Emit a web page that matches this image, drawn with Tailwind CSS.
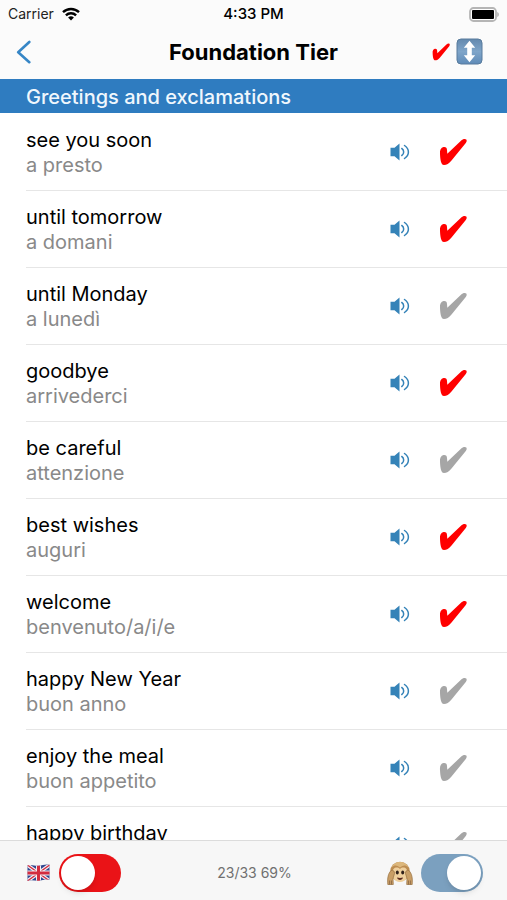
<!DOCTYPE html>
<html lang="en">
  <head>
    <meta charset="UTF-8" />
    <meta name="viewport" content="width=device-width, initial-scale=1.0" />
    <title>Foundation Tier</title>
    <script src="https://cdn.jsdelivr.net/npm/@tailwindcss/browser@4"></script>
  </head>
  <body
    class="flex h-screen flex-col overflow-hidden bg-white font-['Inter',sans-serif] text-black"
  >
    <header class="bg-[#fbfbfb]">
      <!-- Status bar -->
      <div class="grid h-7 grid-cols-3 items-center pr-2 pl-2 text-sm">
        <div class="flex items-center gap-2 text-[#222]">
          <span>Carrier</span>
          <svg class="h-[14px] w-[18px]" viewBox="0 0 18 14" fill="none" stroke="#000" stroke-width="2.4">
            <path d="M1 5.2a11.5 11.5 0 0 1 16 0" />
            <path d="M3.9 8.3a7.3 7.3 0 0 1 10.2 0" />
            <path d="M9 13.6 6.1 10.6a4.2 4.2 0 0 1 5.8 0Z" fill="#000" stroke="none" />
          </svg>
        </div>
        <span class="text-center text-[15px] font-medium">4:33 PM</span>
        <svg class="h-[15px] w-[31px] justify-self-end" viewBox="0 0 31 15">
          <rect x="2" y="1" width="26" height="13" rx="3.5" fill="#fff" stroke="#b5b5b5" stroke-width="1.8" />
          <rect x="4" y="3" width="22" height="9" rx="1" fill="#000" />
          <path d="M29.2 5c1.2.5 1.700 1.4 1.700 2.5s-.5 2-1.700 2.500Z" fill="#b5b5b5" />
        </svg>
      </div>

      <!-- Navigation bar -->
      <nav class="grid h-[51px] grid-cols-[1fr_auto_1fr] items-center px-4 pb-1">
        <a href="#" aria-label="Back">
          <svg class="h-6 w-4" viewBox="0 0 16 24" fill="none" stroke="#3686c6" stroke-width="2.6" stroke-linecap="round" stroke-linejoin="round">
            <path d="M13.300 2 2.200 12.200l11.100 10" />
          </svg>
        </a>
        <h1 class="text-[22px] leading-6 font-bold">Foundation Tier</h1>
        <div class="flex items-center justify-end gap-[6px] pr-2">
          <button type="button" aria-label="Show ticked" class="text-[#ff0000]">
            <svg class="h-[18px] w-[18px]" viewBox="0 0 28 28" fill="currentColor">
              <path d="M1 16C.6 12 2 9.500 4.500 9 6.800 8.600 8 10 8 12l.3 3.800L22.500 2.200c2-1.600 4-1.600 4.800-.6.700 1 .4 2.200-.5 3.400L12.500 22.500C10 25.600 7.500 27 5 27 2 27 1.300 22 1 16Z" />
            </svg>
          </button>
          <button type="button" aria-label="Sort">
            <svg class="h-[27px] w-[27px]" viewBox="0 0 27 27">
              <defs>
                <linearGradient id="sort" x1="0" y1="0" x2="0" y2="1">
                  <stop offset="0" stop-color="#6489ae" />
                  <stop offset="0.500" stop-color="#7fa5c9" />
                  <stop offset="1" stop-color="#5f8bb8" />
                </linearGradient>
              </defs>
              <rect x="1" y="1" width="25" height="25" rx="4" fill="url(#sort)" stroke="#587b9c" />
              <path d="M13.500 2.800 19.200 9.800h-3.400v7.400h3.400L13.500 24.200l-5.700-7h3.400V9.800H7.800Z" fill="#fff" />
            </svg>
          </button>
        </div>
      </nav>
    </header>

    <h2
      class="h-[34px] shrink-0 bg-[#2f7cc0] pt-px pl-[26px] text-xl leading-[34px] font-medium text-[#f0f7fd]"
    >
      Greetings and exclamations
    </h2>

    <main class="min-h-0 flex-1 overflow-hidden">
      <ul id="phrases" class="pt-px pl-[26px]"></ul>
    </main>

    <footer
      class="grid h-[60px] shrink-0 grid-cols-3 items-center border-t border-[#dcdcdc] bg-[#f7f7f7] pt-1 pr-6 pl-[26px]"
    >
      <label class="flex items-center gap-2">
        <svg class="h-6 w-[25px]" viewBox="0 0 25 24" role="img" aria-label="English">
          <defs>
            <clipPath id="flag">
              <path d="M1.500 4.500c4-1.400 7 .6 11 .3 4-.2 7-2 11-1v15c-4-1-7 .6-11 .9-4 .2-7-1.300-11 .3Z" />
            </clipPath>
          </defs>
          <g clip-path="url(#flag)">
            <path fill="#31478f" d="M0 0h25v24H0Z" />
            <path d="m0 3 25 18M25 3 0 21" stroke="#f2eef3" stroke-width="3.600" />
            <path d="m0 3 25 18M25 3 0 21" stroke="#d32b3f" stroke-width="1.300" />
            <path d="M12.500 0v24M0 12h25" stroke="#f2eef3" stroke-width="5" />
            <path d="M12.500 0v24M0 12h25" stroke="#d32b3f" stroke-width="3" />
          </g>
        </svg>
        <input
          type="checkbox"
          role="switch"
          aria-label="Language"
          class="h-[38px] w-[62px] appearance-none rounded-full bg-[#ea1317] p-[2px] before:block before:size-[34px] before:rounded-full before:bg-white before:shadow-md checked:before:ml-6"
        />
      </label>
      <p class="text-center text-sm text-[#707070]">23/33 69%</p>
      <label class="flex items-center justify-end gap-2">
        <svg class="h-7 w-[26px]" viewBox="0 0 26 28" role="img" aria-label="Hide answers">
          <circle cx="13" cy="12.500" r="9.800" fill="#bd8d51" />
          <path d="M4.500 8.500C7 1 19 1 21.500 8.500 18 5.500 16 6.500 13 8.500 10 6.500 8 5.500 4.500 8.500Z" fill="#dcb77c" />
          <path d="M5.500 14c-.5-5 4.500-7 7.500-4 3-3 8-1 7.500 4 1 4.500-2.500 9-7.500 9s-8.500-4.500-7.500-9Z" fill="#efd09e" />
          <path d="M.8 25.500C.3 19 1 14.500 4.200 11.500c2-.8 3.500.8 3.300 3L6 19.500l.3 6ZM25.200 25.500c.5-6.500-.2-11-3.400-14-2-.8-3.500.8-3.300 3l1.500 5-.3 6Z" fill="#c99e66" stroke="#96703f" stroke-width=".7" />
          <path d="M2.600 25.500v-4M4.500 25.500v-4M21.500 25.500v-4M23.400 25.500v-4" stroke="#805d3d" stroke-width=".7" />
          <ellipse cx="10.300" cy="13.600" rx="1.500" ry="2" fill="#30201a" />
          <ellipse cx="15.700" cy="13.600" rx="1.500" ry="2" fill="#30201a" />
          <path d="M10 18.600c2 .6 4 .6 6 0-.5 3.200-5.500 3.200-6 0Z" fill="#5c2b20" />
        </svg>
        <input
          type="checkbox"
          role="switch"
          checked
          aria-label="Hide answers"
          class="h-[38px] w-[62px] appearance-none rounded-full bg-[#7ba0bf] p-[2px] before:block before:size-[34px] before:rounded-full before:bg-white before:shadow-md checked:before:ml-6"
        />
      </label>
    </footer>

    <script>
      const phrases = [
        { english: "see you soon", italian: "a presto", learned: true },
        { english: "until tomorrow", italian: "a domani", learned: true },
        { english: "until Monday", italian: "a lunedì", learned: false },
        { english: "goodbye", italian: "arrivederci", learned: true },
        { english: "be careful", italian: "attenzione", learned: false },
        { english: "best wishes", italian: "auguri", learned: true },
        { english: "welcome", italian: "benvenuto/a/i/e", learned: true },
        { english: "happy New Year", italian: "buon anno", learned: false },
        { english: "enjoy the meal", italian: "buon appetito", learned: false },
        { english: "happy birthday", italian: "buon compleanno", learned: false },
      ];

      const list = document.getElementById("phrases");

      phrases.forEach((phrase) => {
        const row = document.createElement("li");
        row.className =
          "flex h-[77px] items-center border-b border-[#e6e6e6] pr-10";
        row.innerHTML = `
          <div class="flex-1 pt-[2px] text-xl leading-[25px]">
            <p>${phrase.english}</p>
            <p class="text-[#898989]">${phrase.italian}</p>
          </div>
          <button type="button" aria-label="Listen to ${phrase.italian}" class="mr-7 text-[#3583b8]">
            <svg class="h-5 w-[22px]" viewBox="0 0 22 20" fill="none" stroke="currentColor" stroke-width="1.500" stroke-linecap="round">
              <path d="M1.500 5.700h4l5-4.200v17l-5-4.200h-4Z" fill="currentColor" stroke="none" />
              <path d="M12.800 6.500c2.500 1.500 2.500 5.500 0 7M15.500 3.500c5.200 3.500 5.200 9.500 0 13" />
            </svg>
          </button>
          <label class="relative">
            <input type="checkbox" aria-label="${phrase.english} learned" class="peer sr-only" ${phrase.learned ? "checked" : ""} />
            <svg class="size-7 text-[#a6a6a6] peer-checked:text-[#ff0000]" viewBox="0 0 28 28" fill="currentColor">
              <path d="M1 16C.6 12 2 9.500 4.500 9 6.800 8.600 8 10 8 12l.3 3.800L22.500 2.200c2-1.600 4-1.600 4.800-.6.700 1 .4 2.200-.5 3.400L12.500 22.500C10 25.600 7.500 27 5 27 2 27 1.300 22 1 16Z" />
            </svg>
          </label>
        `;
        list.appendChild(row);
      });
    </script>
  </body>
</html>
